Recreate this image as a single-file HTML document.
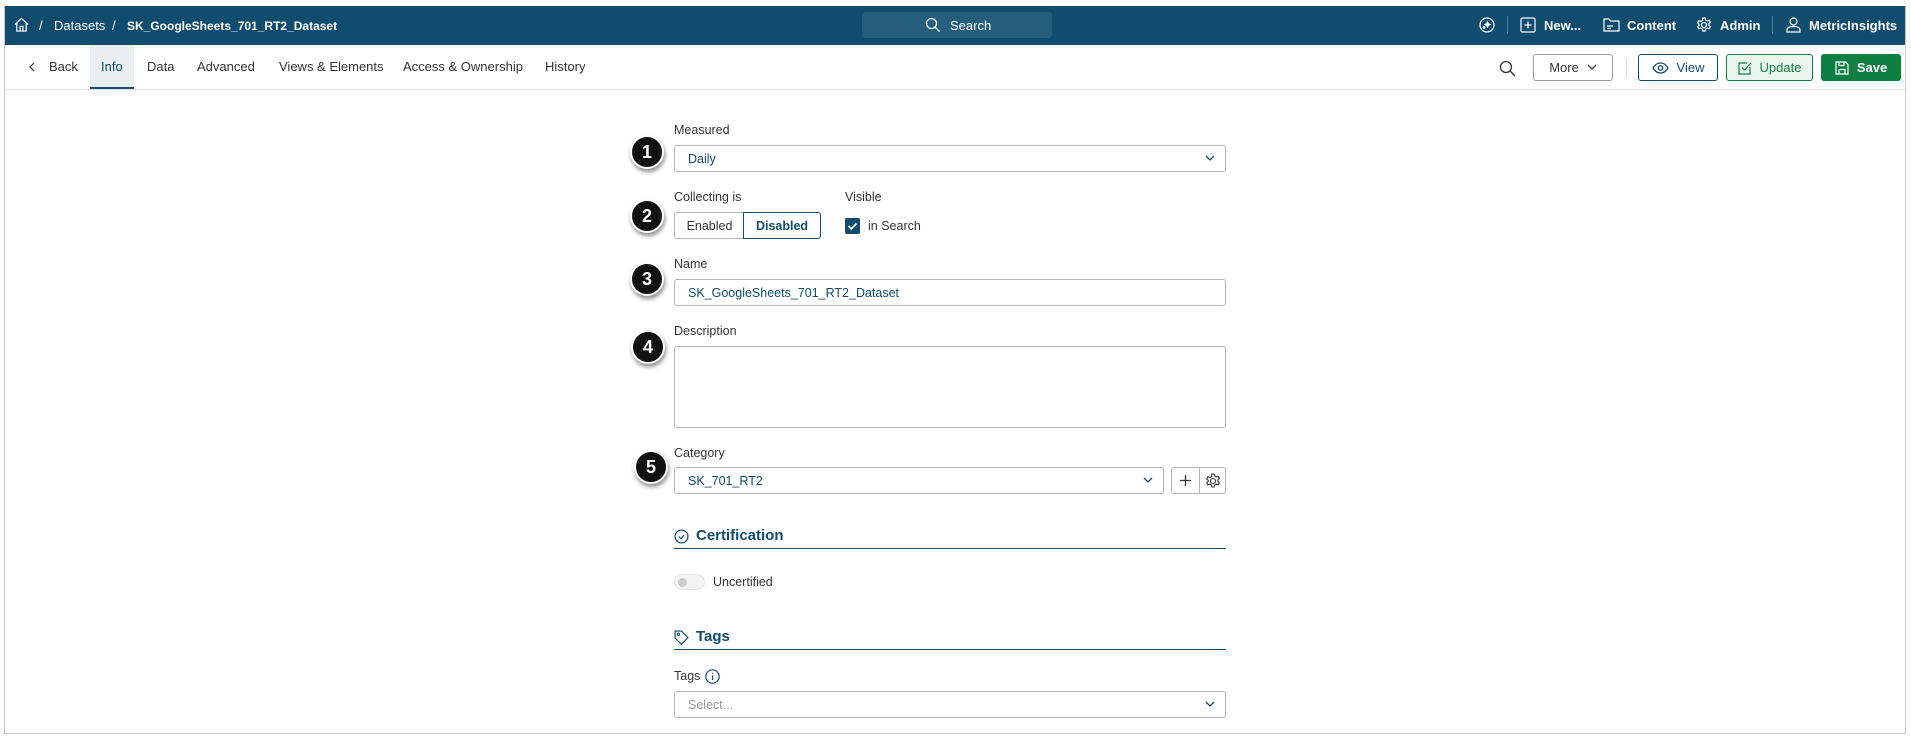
<!DOCTYPE html>
<html><head><meta charset="utf-8"><style>
*{box-sizing:border-box;margin:0;padding:0}
body{width:1911px;height:736px;background:#fff;font-family:"Liberation Sans",sans-serif;font-size:12.5px;color:#333;position:relative;overflow:hidden}
.a{position:absolute}
.frame{left:4px;top:5px;width:1902px;height:729px;border:1px solid #c8c8c8;border-top:none}
.hdr{left:5px;top:6px;width:1900px;height:39px;background:#0f4c6e;color:#fff}
.ht{position:absolute;top:13px;color:#fff;font-weight:bold;font-size:13px;line-height:14px}
.nav{left:5px;top:45px;width:1900px;height:45px;border-bottom:1px solid #e3e3e3}
.tab{position:absolute;top:15px;font-size:13px;color:#333;line-height:14px}
.btn{position:absolute;top:54px;height:27px;border-radius:3px;font-size:13px;display:flex;align-items:center;justify-content:center;gap:8px}
.lbl{position:absolute;font-size:12.5px;color:#333;line-height:14px}
.inp{position:absolute;border:1px solid #b5b5b5;border-radius:3px;background:#fff;color:#0f4c6e;font-size:12.5px;padding-left:13px;display:flex;align-items:center}
.chev{position:absolute;right:10px;top:9px}
.badge{position:absolute;width:34px;height:34px;border-radius:50%;background:#111;color:#fff;font-weight:bold;font-size:18px;display:flex;align-items:center;justify-content:center;box-shadow:1px 3px 4px rgba(0,0,0,.45);border:2px solid #fff}
.sec{position:absolute;left:674px;width:552px;border-bottom:1.5px solid #0f4c6e;color:#0f4c6e;font-weight:bold;font-size:15px;height:22px;display:flex;align-items:flex-start;gap:7px}
</style></head><body>
<div class="a frame"></div>
<div class="a hdr">
 <svg class="a" style="left:9px;top:11px" width="15" height="15" viewBox="0 0 16 16" fill="none" stroke="#fff" stroke-width="1.3"><path d="M1 8L8 1.5 15 8M3 6.5V15h10V6.5M6.5 15v-5h3v5"/></svg>
 <span class="ht" style="left:34px;font-weight:normal">/</span>
 <span class="ht" style="left:49px;font-weight:normal">Datasets</span>
 <span class="ht" style="left:107px;font-weight:normal">/</span>
 <span class="ht" style="left:122px;font-size:12px">SK_GoogleSheets_701_RT2_Dataset</span>
 <div class="a" style="left:857px;top:6px;width:190px;height:26px;background:#255e7d;border-radius:3px"></div>
 <svg class="a" style="left:920px;top:11px" width="16" height="16" viewBox="0 0 16 16" fill="none" stroke="#fff" stroke-width="1.3"><circle cx="6.5" cy="6.5" r="5"/><path d="M10 10l4.5 4.5"/></svg>
 <span class="ht" style="left:945px;font-weight:normal">Search</span>
 <svg class="a" style="left:1474px;top:11px" width="16" height="16" viewBox="0 0 16 16" fill="none" stroke="#fff" stroke-width="1.2"><circle cx="8" cy="8" r="7"/><path d="M8.5 5l.8 1.7 1.7.8-1.7.8-.8 1.7-.8-1.7-1.7-.8 1.7-.8z" fill="#fff"/><circle cx="5" cy="10.5" r=".8" fill="#fff"/></svg>
 <div class="a" style="left:1502px;top:10px;width:1px;height:18px;background:#4d7a94"></div>
 <svg class="a" style="left:1515px;top:11px" width="16" height="16" viewBox="0 0 16 16" fill="none" stroke="#fff" stroke-width="1.2"><rect x="1" y="1" width="14" height="14" rx="1.5"/><path d="M8 4.5v7M4.5 8h7"/></svg>
 <span class="ht" style="left:1539px">New...</span>
 <svg class="a" style="left:1598px;top:11px" width="17" height="16" viewBox="0 0 17 16" fill="none" stroke="#fff" stroke-width="1.2"><path d="M1 2h5l1.5 2H16v10H1z"/><path d="M4 9h6M4 11.5h4"/></svg>
 <span class="ht" style="left:1622px">Content</span>
 <svg class="a" style="left:1691px;top:11px" width="16" height="16" viewBox="0 0 16 16" fill="none" stroke="#fff" stroke-width="1.2"><circle cx="8" cy="8" r="2.5"/><path d="M6.8 1h2.4l.4 2 1.6.9 1.9-.7 1.2 2.1-1.5 1.4v1.6l1.5 1.4-1.2 2.1-1.9-.7-1.6.9-.4 2H6.8l-.4-2-1.6-.9-1.9.7-1.2-2.1 1.5-1.4V7.3L1.7 5.9l1.2-2.1 1.9.7 1.6-.9z"/></svg>
 <span class="ht" style="left:1715px">Admin</span>
 <div class="a" style="left:1767px;top:10px;width:1px;height:18px;background:#4d7a94"></div>
 <svg class="a" style="left:1781px;top:11px" width="15" height="16" viewBox="0 0 15 16" fill="none" stroke="#fff" stroke-width="1.2"><circle cx="7.5" cy="4.5" r="3.5"/><path d="M1 15v-2c0-2 2-3.5 6.5-3.5S14 11 14 13v2z"/></svg>
 <span class="ht" style="left:1804px">MetricInsights</span>
</div>
<div class="a nav">
 <div class="a" style="left:85px;top:0;width:44px;height:44px;background:#e9eff3;border-bottom:2px solid #0f4c6e"></div>
 <svg class="a" style="left:23px;top:17px" width="8" height="10" viewBox="0 0 8 10" fill="none" stroke="#333" stroke-width="1.2"><path d="M6 1L2 5l4 4"/></svg>
 <span class="tab" style="left:44px">Back</span>
 <span class="tab" style="left:96px;color:#0f4c6e">Info</span>
 <span class="tab" style="left:142px">Data</span>
 <span class="tab" style="left:192px">Advanced</span>
 <span class="tab" style="left:274px">Views &amp; Elements</span>
 <span class="tab" style="left:398px">Access &amp; Ownership</span>
 <span class="tab" style="left:540px">History</span>
</div>
<svg class="a" style="left:1499px;top:60px" width="17" height="17" viewBox="0 0 17 17" fill="none" stroke="#333" stroke-width="1.3"><circle cx="7" cy="7" r="5.5"/><path d="M11 11l5 5"/></svg>
<div class="btn" style="left:1533px;width:80px;border:1px solid #999;color:#333">More <svg width="10" height="7" viewBox="0 0 10 7" fill="none" stroke="#333" stroke-width="1.3"><path d="M1 1l4 4 4-4"/></svg></div>
<div class="a" style="left:1626px;top:59px;width:1px;height:18px;background:#ddd"></div>
<div class="btn" style="left:1638px;width:80px;border:1px solid #0f4c6e;color:#0f4c6e"><svg width="17" height="12" viewBox="0 0 17 12" fill="none" stroke="#0f4c6e" stroke-width="1.3"><path d="M1 6c2-3.5 4.5-5 7.5-5s5.5 1.5 7.5 5c-2 3.5-4.5 5-7.5 5S3 9.5 1 6z"/><circle cx="8.5" cy="6" r="2.2"/></svg>View</div>
<div class="btn" style="left:1726px;width:87px;border:1px solid #0f7f44;color:#0f7f44;background:#e9f4ee"><svg width="14" height="14" viewBox="0 0 14 14" fill="none" stroke="#0f7f44" stroke-width="1.2"><path d="M12 6v7H1V2h8"/><path d="M4 6.5l2.5 2.5L13 2"/></svg>Update</div>
<div class="btn" style="left:1821px;width:80px;background:#0e7f43;color:#fff;font-weight:bold"><svg width="14" height="14" viewBox="0 0 14 14" fill="none" stroke="#fff" stroke-width="1.2"><path d="M1 1h9.5L13 3.5V13H1z"/><path d="M4 1v3.5h5V1M4 13V8.5h6V13"/></svg>Save</div>

<!-- form -->
<div class="lbl" style="left:674px;top:123px">Measured</div>
<div class="inp" style="left:674px;top:145px;width:552px;height:27px">Daily<svg class="chev" width="10" height="7" viewBox="0 0 10 7" fill="none" stroke="#0f4c6e" stroke-width="1.3"><path d="M1 1l4 4 4-4"/></svg></div>
<div class="badge" style="left:630px;top:135px">1</div>

<div class="lbl" style="left:674px;top:190px">Collecting is</div>
<div class="a" style="left:674px;top:212px;width:70px;height:27px;border:1px solid #b5b5b5;border-right:none;border-radius:3px 0 0 3px;font-size:12.5px;display:flex;align-items:center;justify-content:center">Enabled</div>
<div class="a" style="left:743px;top:212px;width:78px;height:27px;border:1px solid #0f4c6e;border-radius:0 3px 3px 0;font-size:12.5px;color:#0f4c6e;font-weight:bold;display:flex;align-items:center;justify-content:center">Disabled</div>
<div class="lbl" style="left:845px;top:190px">Visible</div>
<div class="a" style="left:845px;top:218px;width:15px;height:16px;background:#0f4c6e;border-radius:2px"><svg width="15" height="16" viewBox="0 0 15 16" fill="none" stroke="#fff" stroke-width="1.7"><path d="M3.5 8l2.8 2.8L11.5 5.5"/></svg></div>
<div class="lbl" style="left:868px;top:219px">in Search</div>
<div class="badge" style="left:630px;top:199px">2</div>

<div class="lbl" style="left:674px;top:257px">Name</div>
<div class="inp" style="left:674px;top:279px;width:552px;height:27px">SK_GoogleSheets_701_RT2_Dataset</div>
<div class="badge" style="left:630px;top:262px">3</div>

<div class="lbl" style="left:674px;top:324px">Description</div>
<div class="inp" style="left:674px;top:346px;width:552px;height:82px"></div>
<div class="badge" style="left:631px;top:330px">4</div>

<div class="lbl" style="left:674px;top:446px">Category</div>
<div class="inp" style="left:674px;top:467px;width:490px;height:27px">SK_701_RT2<svg class="chev" width="10" height="7" viewBox="0 0 10 7" fill="none" stroke="#0f4c6e" stroke-width="1.3"><path d="M1 1l4 4 4-4"/></svg></div>
<div class="a" style="left:1171px;top:467px;width:55px;height:27px;border:1px solid #b5b5b5;border-radius:3px"><div class="a" style="left:27px;top:0;width:1px;height:25px;background:#b5b5b5"></div>
<svg class="a" style="left:7px;top:6px" width="13" height="13" viewBox="0 0 13 13" stroke="#333" stroke-width="1.3"><path d="M6.5 1v11M1 6.5h11"/></svg>
<svg class="a" style="left:33px;top:5px" width="16" height="16" viewBox="0 0 16 16" fill="none" stroke="#333" stroke-width="1.1"><circle cx="8" cy="8" r="2.5"/><path d="M6.8 1h2.4l.4 2 1.6.9 1.9-.7 1.2 2.1-1.5 1.4v1.6l1.5 1.4-1.2 2.1-1.9-.7-1.6.9-.4 2H6.8l-.4-2-1.6-.9-1.9.7-1.2-2.1 1.5-1.4V7.3L1.7 5.9l1.2-2.1 1.9.7 1.6-.9z"/></svg></div>
<div class="badge" style="left:634px;top:450px">5</div>

<div class="sec" style="top:527px"><svg width="15" height="15" viewBox="0 0 14 14" fill="none" stroke="#0f4c6e" stroke-width="1.1" style="margin-top:2px"><circle cx="7" cy="7" r="6"/><path d="M4.5 7l2 2 3-3.5"/></svg>Certification</div>
<div class="a" style="left:674px;top:574px;width:31px;height:16px;border-radius:8px;background:#f3f3f3;border:1px solid #e6e6e6"><div class="a" style="left:3px;top:3px;width:9px;height:9px;border-radius:50%;background:#ccc"></div></div>
<div class="lbl" style="left:713px;top:575px">Uncertified</div>

<div class="sec" style="top:628px"><svg width="15" height="16" viewBox="0 0 14 15" fill="none" stroke="#0f4c6e" stroke-width="1.1" style="margin-top:2px"><path d="M1 1h6l6 6-6 6.5L1 7.5z"/><circle cx="4" cy="4" r="1"/></svg>Tags</div>
<div class="lbl" style="left:674px;top:669px">Tags</div>
<svg class="a" style="left:705px;top:669px" width="15" height="15" viewBox="0 0 13 13" fill="none" stroke="#0f4c6e" stroke-width="1"><circle cx="6.5" cy="6.5" r="5.8"/><path d="M6.5 5.5v4M6.5 3.3v.8"/></svg>
<div class="inp" style="left:674px;top:691px;width:552px;height:27px;color:#999">Select...<svg class="chev" width="10" height="7" viewBox="0 0 10 7" fill="none" stroke="#0f4c6e" stroke-width="1.3"><path d="M1 1l4 4 4-4"/></svg></div>
</body></html>
